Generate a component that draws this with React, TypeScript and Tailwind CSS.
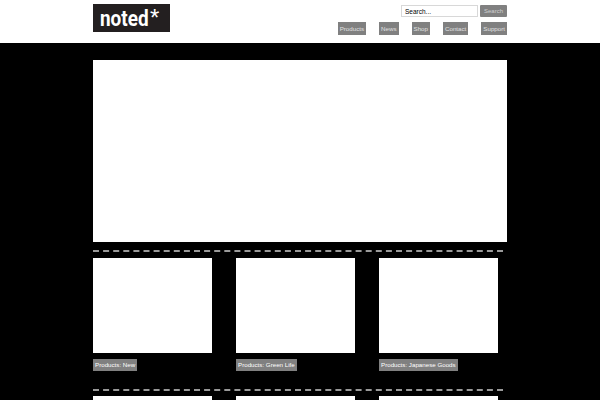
// Шапка, большой баннер и сетка карточек на чёрном фоне
const navItems = ['Products', 'News', 'Shop', 'Contact', 'Support'];
const products = ['Products: New', 'Products: Green Life', 'Products: Japanese Goods'];

function Dashes() {
  return <div className="h-0 w-[410px] border-t-2 border-dashed border-[#9a9a9a]" />;
}

function ProductCard({ title }: { title?: string }) {
  return (
    <div className="flex w-[119px] flex-col items-start">
      <div className="h-[95px] w-full bg-white" />
      {title ? (
        <span className="mt-[6px] h-[12px] whitespace-nowrap bg-[#808080] px-[2px] text-[6.2px] leading-[12px] text-white">
          {title}
        </span>
      ) : null}
    </div>
  );
}

export default function App() {
  return (
    <div className="h-[400px] w-[600px] overflow-hidden bg-black font-['Liberation_Sans',Arial,sans-serif]">
      <header className="h-[43px] bg-white">
        <div className="mx-auto flex w-[414px] justify-between">
          <div className="mt-[4px] h-[28px] w-[77px] whitespace-nowrap bg-[#231f20] pl-[7px] text-white">
            <span className="inline-block w-[50px] origin-left scale-x-[0.86] font-['Roboto',sans-serif] text-[22px] font-bold leading-[28px]">
              noted
            </span>
            <span className="text-[24px] font-normal leading-[28px]">*</span>
          </div>
          <div className="flex flex-col items-end">
            <div className="mt-[5px] flex items-center gap-[2px]">
              <input
                readOnly
                value="Search..."
                className="h-[12px] w-[77px] border border-[#d8d8d8] bg-white px-[3px] text-[6.5px] text-black outline-none"
              />
              <button className="h-[12px] w-[27px] rounded-[1px] bg-[#808080] text-[6px] leading-[12px] text-[#d0d0d0]">
                Search
              </button>
            </div>
            <nav className="mt-[5px] flex gap-[13px]">
              {navItems.map((item) => (
                <a
                  key={item}
                  className="h-[13px] bg-[#808080] px-[2px] text-[6.2px] leading-[13px] text-[#e0e0e0]"
                >
                  {item}
                </a>
              ))}
            </nav>
          </div>
        </div>
      </header>

      <main className="mx-auto w-[414px] pt-[17px]">
        <div className="h-[182px] w-full bg-white" />
        <div className="mt-[8px]">
          <Dashes />
        </div>
        <div className="mt-[6px] flex h-[113px] gap-[24px]">
          {products.map((title) => (
            <ProductCard key={title} title={title} />
          ))}
        </div>
        <div className="mt-[18px]">
          <Dashes />
        </div>
        <div className="mt-[5px] flex gap-[24px]">
          <ProductCard />
          <ProductCard />
          <ProductCard />
        </div>
      </main>
    </div>
  );
}
